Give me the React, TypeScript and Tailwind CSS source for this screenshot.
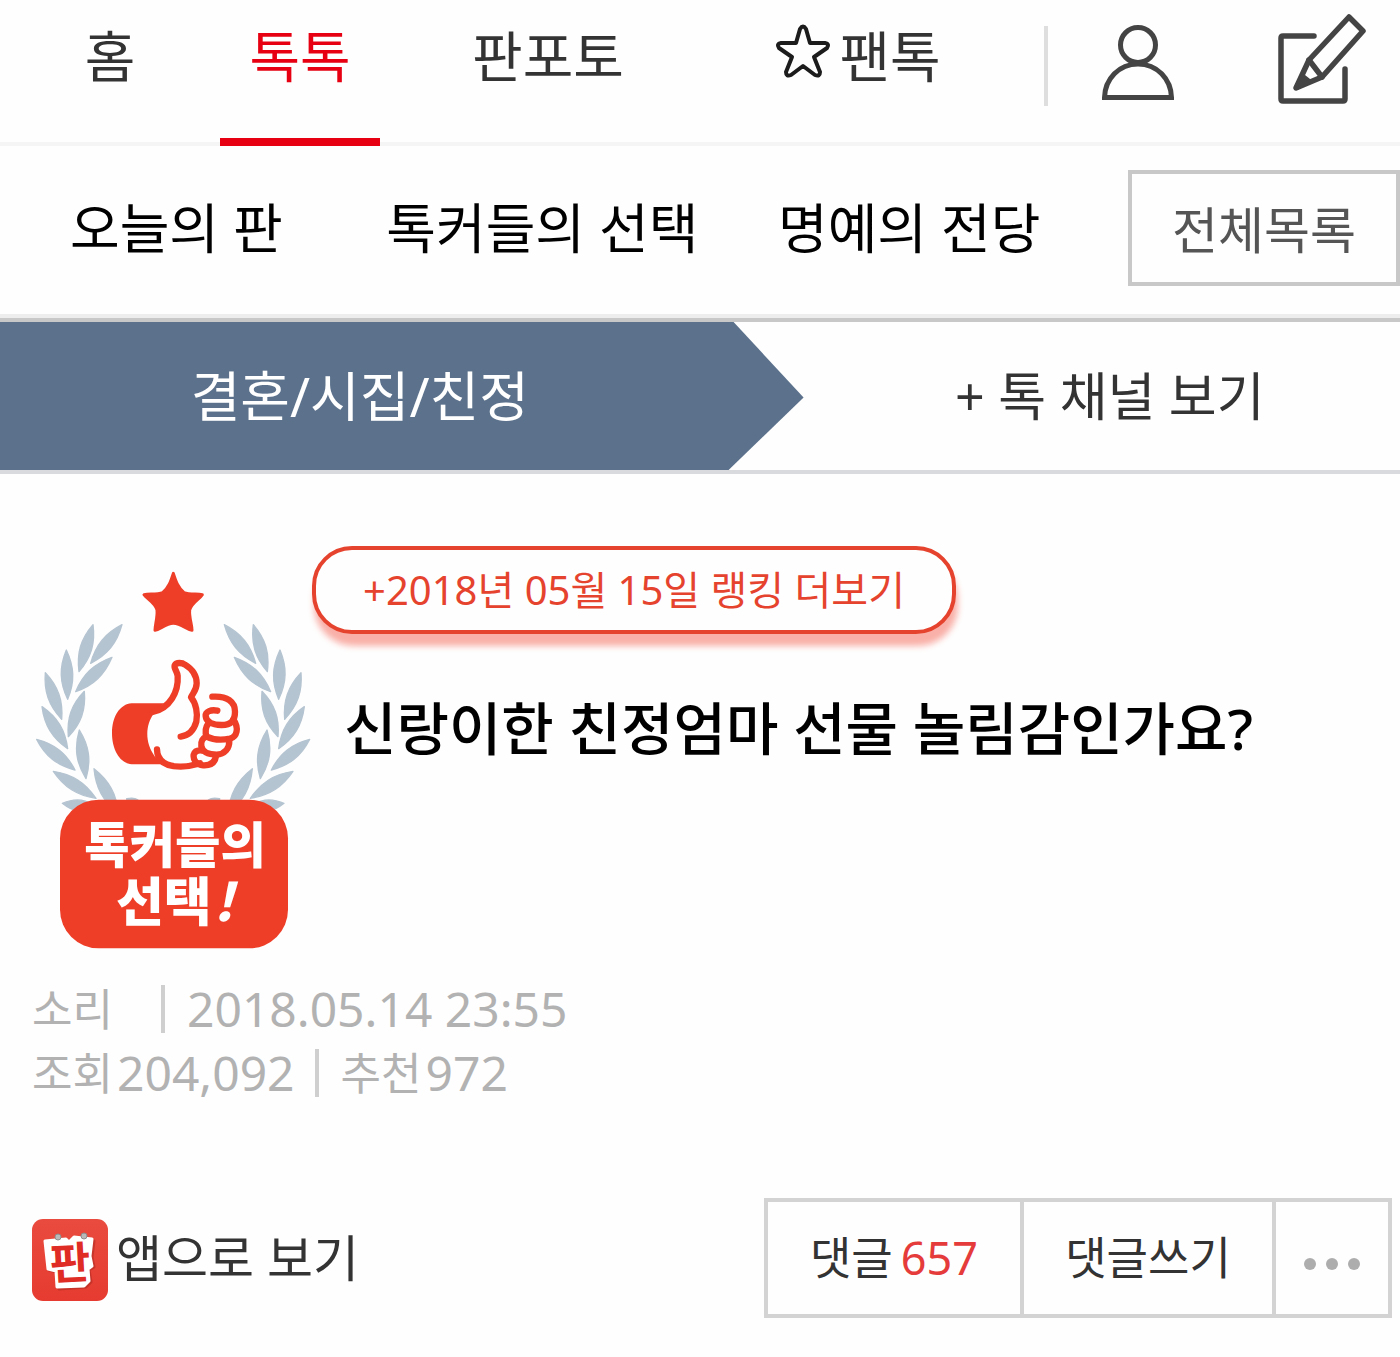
import type { ReactNode } from "react";

// Each leaf runs from its outer tip to the point where it meets the stem
const leaves = [
  [219, 224, 177, 365],
  [306, 224, 212, 340],
  [139, 300, 143, 448],
  [276, 322, 167, 425],
  [76, 368, 125, 508],
  [193, 424, 145, 560],
  [66, 470, 143, 596],
  [178, 540, 198, 686],
  [50, 568, 165, 660],
  [222, 656, 295, 790],
  [100, 664, 228, 745],
  [127, 760, 235, 775],
  [320, 746, 365, 780],
];

function leafPath([x1, y1, x2, y2]: number[]) {
  const dx = x2 - x1;
  const dy = y2 - y1;
  const length = Math.hypot(dx, dy);
  const nx = (-dy / length) * 23;
  const ny = (dx / length) * 23;
  const ax = x1 + dx * 0.35;
  const ay = y1 + dy * 0.35;
  const bx = x1 + dx * 0.65;
  const by = y1 + dy * 0.65;
  return `M${x1} ${y1}C${ax + nx} ${ay + ny} ${bx + nx} ${by + ny} ${x2} ${y2}C${bx - nx} ${by - ny} ${ax - nx} ${ay - ny} ${x1} ${y1}Z`;
}

function Laurel() {
  return (
    <g fill="#b5c4d1" stroke="#b5c4d1" strokeWidth="4" strokeLinejoin="round">
      {leaves.map((leaf) => (
        <path key={leaf.join("-")} d={leafPath(leaf)} />
      ))}
    </g>
  );
}

function ChoiceBadge() {
  return (
    <svg viewBox="36 60 840 1140" className="mt-6 h-[380px] w-[280px] shrink-0" role="img" aria-label="톡커들의 선택!">
      <Laurel />
      <g transform="translate(919 0) scale(-1 1)">
        <Laurel />
      </g>
      <path
        d="M460 70C468 95 474 112 492 128C510 134 530 131 547 134C540 146 514 158 509 180C507 202 516 224 516 241C500 238 482 220 460 220C438 220 421 238 405 241C405 224 413 202 411 180C406 158 380 146 372 134C389 131 410 134 428 128C446 112 452 95 460 70Z"
        fill="#ee3e28"
        stroke="#ee3e28"
        strokeWidth="9"
        strokeLinejoin="round"
      />
      {/* Sleeve */}
      <path
        d="M335 460H432L400 492C378 525 372 575 405 620L435 643H335C300 640 276 600 276 550C276 500 300 462 335 460Z"
        fill="#ee3e28"
      />
      {/* Hand */}
      <g fill="none" stroke="#ee3e28" strokeWidth="19" strokeLinecap="round" strokeLinejoin="round">
        <path d="M398 486C450 475 476 425 473 378C472 364 461 356 464 346C469 336 487 338 495 344C518 358 530 378 530 400C530 422 518 430 513 442C528 460 534 490 529 515C522 540 505 557 482 560" />
        <path d="M411 598C412 635 440 650 482 650C510 650 528 643 540 640" />
        <path d="M577 440C622 437 645 455 645 485C645 512 632 525 605 525C572 525 558 513 557 498C556 484 574 478 592 482" />
        <path d="M640 508C658 535 651 560 630 566C605 571 580 570 560 560C554 545 558 530 565 520" />
        <path d="M628 570C629 598 612 613 590 614C562 614 546 604 544 588C542 574 549 564 558 560" />
        <path d="M588 618C585 639 572 647 550 646C529 644 519 631 521 614C525 602 536 600 547 602" />
      </g>
      <rect x="120" y="749" width="684" height="446" rx="116" fill="#ee3e28" />
      <text fill="#fff" fontWeight="900" fontSize="148" fontFamily="'Noto Sans CJK KR', sans-serif">
        <tspan x="193" y="938">톡커들의</tspan>
        <tspan x="288" y="1112" fontSize="156">선택</tspan>
        <tspan x="580" y="1112" fontSize="156" fontStyle="italic">!</tspan>
      </text>
    </svg>
  );
}

function StarIcon() {
  return (
    <svg viewBox="776 24 56 56" className="-mt-2 h-14 w-14" fill="none" stroke="#1c1c1c" strokeWidth="4" strokeLinejoin="round" aria-hidden="true">
      <path d="M801 29Q804 24 807 29L811 43L826 43Q831 44 828 48L815 57L821 72Q821 77 816 75L804 66L792 75Q787 77 787 72L793 57L780 48Q777 44 782 43L797 43Z" />
    </svg>
  );
}

function UserIcon() {
  return (
    <svg viewBox="0 0 72 76" className="h-[76px] w-[72px]" fill="none" stroke="#444" strokeWidth="5" aria-hidden="true">
      <ellipse cx="36" cy="20" rx="17.5" ry="17.5" />
      <path d="M2.5 72.500C3 54 17 39 36 39S69 54 69.500 72.500Z" />
    </svg>
  );
}

function WriteIcon() {
  return (
    <svg viewBox="1278 14 88 90" className="h-[90px] w-[88px]" fill="none" stroke="#444" strokeWidth="5.500" strokeLinecap="round" strokeLinejoin="round" aria-hidden="true">
      <path d="M1314 36H1283Q1281 36 1281 38V99Q1281 101 1283 101H1343Q1345 101 1345 99V69" />
      <path d="M1309 60L1349 17L1363 31L1322 77L1296 88Z" />
      <path d="M1309 60L1322 77M1297 87L1303 77L1308 81Z" />
    </svg>
  );
}

function AppIcon() {
  return (
    <svg viewBox="0 0 76 82" className="mt-1 h-[82px] w-[76px]" aria-hidden="true">
      <defs>
        <linearGradient id="app-bg" x1="0" y1="0" x2="0" y2="1">
          <stop offset="0" stopColor="#e94b3e" />
          <stop offset="1" stopColor="#e63b30" />
        </linearGradient>
      </defs>
      <rect width="76" height="82" rx="11" fill="url(#app-bg)" />
      {/* Cut-out paper letter with its shadow */}
      <g strokeLinejoin="round" strokeWidth="3">
        <path
          d="M15 23L35 21L38 24L43 19L62 22L60 38L62 48L57 51L59 63L54 68L27 70L25 53L17 51Z"
          fill="#a92820"
          stroke="#a92820"
          opacity="0.5"
        />
        <path
          d="M13 22L34 20L37 23L42 18L60 20L58 37L60 47L56 50L57 62L52 67L25 68L24 52L16 50Z"
          fill="#fff"
          stroke="#fff"
        />
      </g>
      <text
        x="38"
        y="60"
        transform="rotate(-3 38 42)"
        fill="#df2c24"
        fontFamily="'Noto Sans CJK KR', sans-serif"
        fontSize="44"
        fontWeight="700"
        textAnchor="middle"
      >
        판
      </text>
      <g fill="#b9b9b9" stroke="#8d8d8d">
        <circle cx="26" cy="18" r="3" />
        <circle cx="52" cy="17" r="3" />
      </g>
    </svg>
  );
}

function NavLink({ children, active = false }: { children: ReactNode; active?: boolean }) {
  return (
    <a
      href="#"
      aria-current={active ? "page" : undefined}
      className={
        active
          ? "-mb-1 flex h-[146px] justify-center border-b-8 border-[#e60012] pt-4 text-[#e60012]"
          : "flex justify-center pt-4 text-[#333]"
      }
    >
      <span className="flex h-20 items-center gap-2">{children}</span>
    </a>
  );
}

export default function App() {
  return (
    <div lang="ko" className="min-h-screen bg-[#fefefe] font-['Noto_Sans','Noto_Sans_CJK_KR',sans-serif] whitespace-nowrap text-[#333]">
      <header>
        <nav className="grid h-[146px] grid-cols-[55fr_40fr_84fr_71fr_100fr] border-b-4 border-[#f5f5f5] text-[55px]">
          <NavLink>홈</NavLink>
          <NavLink active>톡톡</NavLink>
          <NavLink>판포토</NavLink>
          <NavLink>
            <StarIcon />
            팬톡
          </NavLink>
          <div className="flex items-start justify-between pr-[34px] pl-11">
            <div className="flex items-start gap-[54px]">
              <span className="mt-[26px] h-20 w-1 bg-[#dedede]" />
              <a href="#" aria-label="내 정보" className="mt-[25px]">
                <UserIcon />
              </a>
            </div>
            <a href="#" aria-label="글쓰기" className="mt-[14px]">
              <WriteIcon />
            </a>
          </div>
        </nav>

        <nav className="flex h-[172px] items-center justify-between border-b-4 border-[#ededed] pb-1 pl-[70px] text-[54px] text-black">
          <a href="#" className="mr-6">오늘의 판</a>
          <a href="#">톡커들의 선택</a>
          <a href="#" className="mr-2">명예의 전당</a>
          <a href="#" className="flex h-[116px] w-[272px] items-center justify-center border-4 border-[#c8c8c8] pt-1 text-[50px] text-[#555]">
            전체목록
          </a>
        </nav>
      </header>

      <div className="flex h-[156px] border-y-4 border-t-[#c8c8c8] border-b-[#d8dade] text-[54px]">
        <a
          href="#"
          className="flex w-[57.4%] items-center justify-center bg-[#5c728c] pr-[84px] text-white [clip-path:polygon(0_0,calc(100%-70px)_0,100%_51%,calc(100%-75px)_100%,0_100%)]"
        >
          결혼/시집/친정
        </a>
        <a href="#" className="flex flex-1 items-center justify-center pl-4 text-[52px]">
          + 톡 채널 보기
        </a>
      </div>

      <main>
        <div className="flex items-start px-8 pt-[72px]">
          <ChoiceBadge />
          <div>
            <a
              href="#"
              className="flex h-[88px] w-[644px] items-center justify-center rounded-[40px] border-4 border-[#e6432e] bg-[#fefefe] text-[40px] text-[#e6432e] shadow-[2px_12px_6px_#f9b0a8]"
            >
              +2018년 05월 15일 랭킹 더보기
            </a>
            <h1 className="mt-[52px] pl-8 text-[57px] leading-[84px] font-medium text-black">
              신랑이한 친정엄마 선물 놀림감인가요?
            </h1>
          </div>
        </div>

        <div className="mt-[27px] px-8 text-5xl text-[#b2b2b2]">
          <div className="flex h-16 items-center">
            <span className="text-[44px]">소리</span>
            <span className="mr-[22px] ml-12 h-12 w-1 bg-[#cfcfcf]" />
            <time dateTime="2018-05-14T23:55">2018.05.14 23:55</time>
          </div>
          <div className="flex h-16 items-center">
            <span className="mr-1 text-[44px]">조회</span>
            204,092
            <span className="mr-[22px] ml-5 h-12 w-1 bg-[#cfcfcf]" />
            <span className="mr-1 text-[44px]">추천</span>
            972
          </div>
        </div>

        <div className="mt-[93px] flex items-center justify-between pr-2 pl-8">
          <a href="#" className="flex items-center gap-2 text-[50px]">
            <AppIcon />
            앱으로 보기
          </a>
          <div className="flex h-[120px] divide-x-4 divide-[#d3d3d3] border-4 border-[#d3d3d3] text-[45px]">
            <a href="#" className="flex w-64 items-center justify-center gap-2">
              댓글 <span className="text-[#e53b3b]">657</span>
            </a>
            <button type="button" className="w-[252px]">
              댓글쓰기
            </button>
            <button type="button" aria-label="더보기" className="flex w-28 items-center justify-center gap-[10px] pt-3">
              <span className="h-3 w-3 rounded-full bg-[#adadad]" />
              <span className="h-3 w-3 rounded-full bg-[#adadad]" />
              <span className="h-3 w-3 rounded-full bg-[#adadad]" />
            </button>
          </div>
        </div>
      </main>
    </div>
  );
}
